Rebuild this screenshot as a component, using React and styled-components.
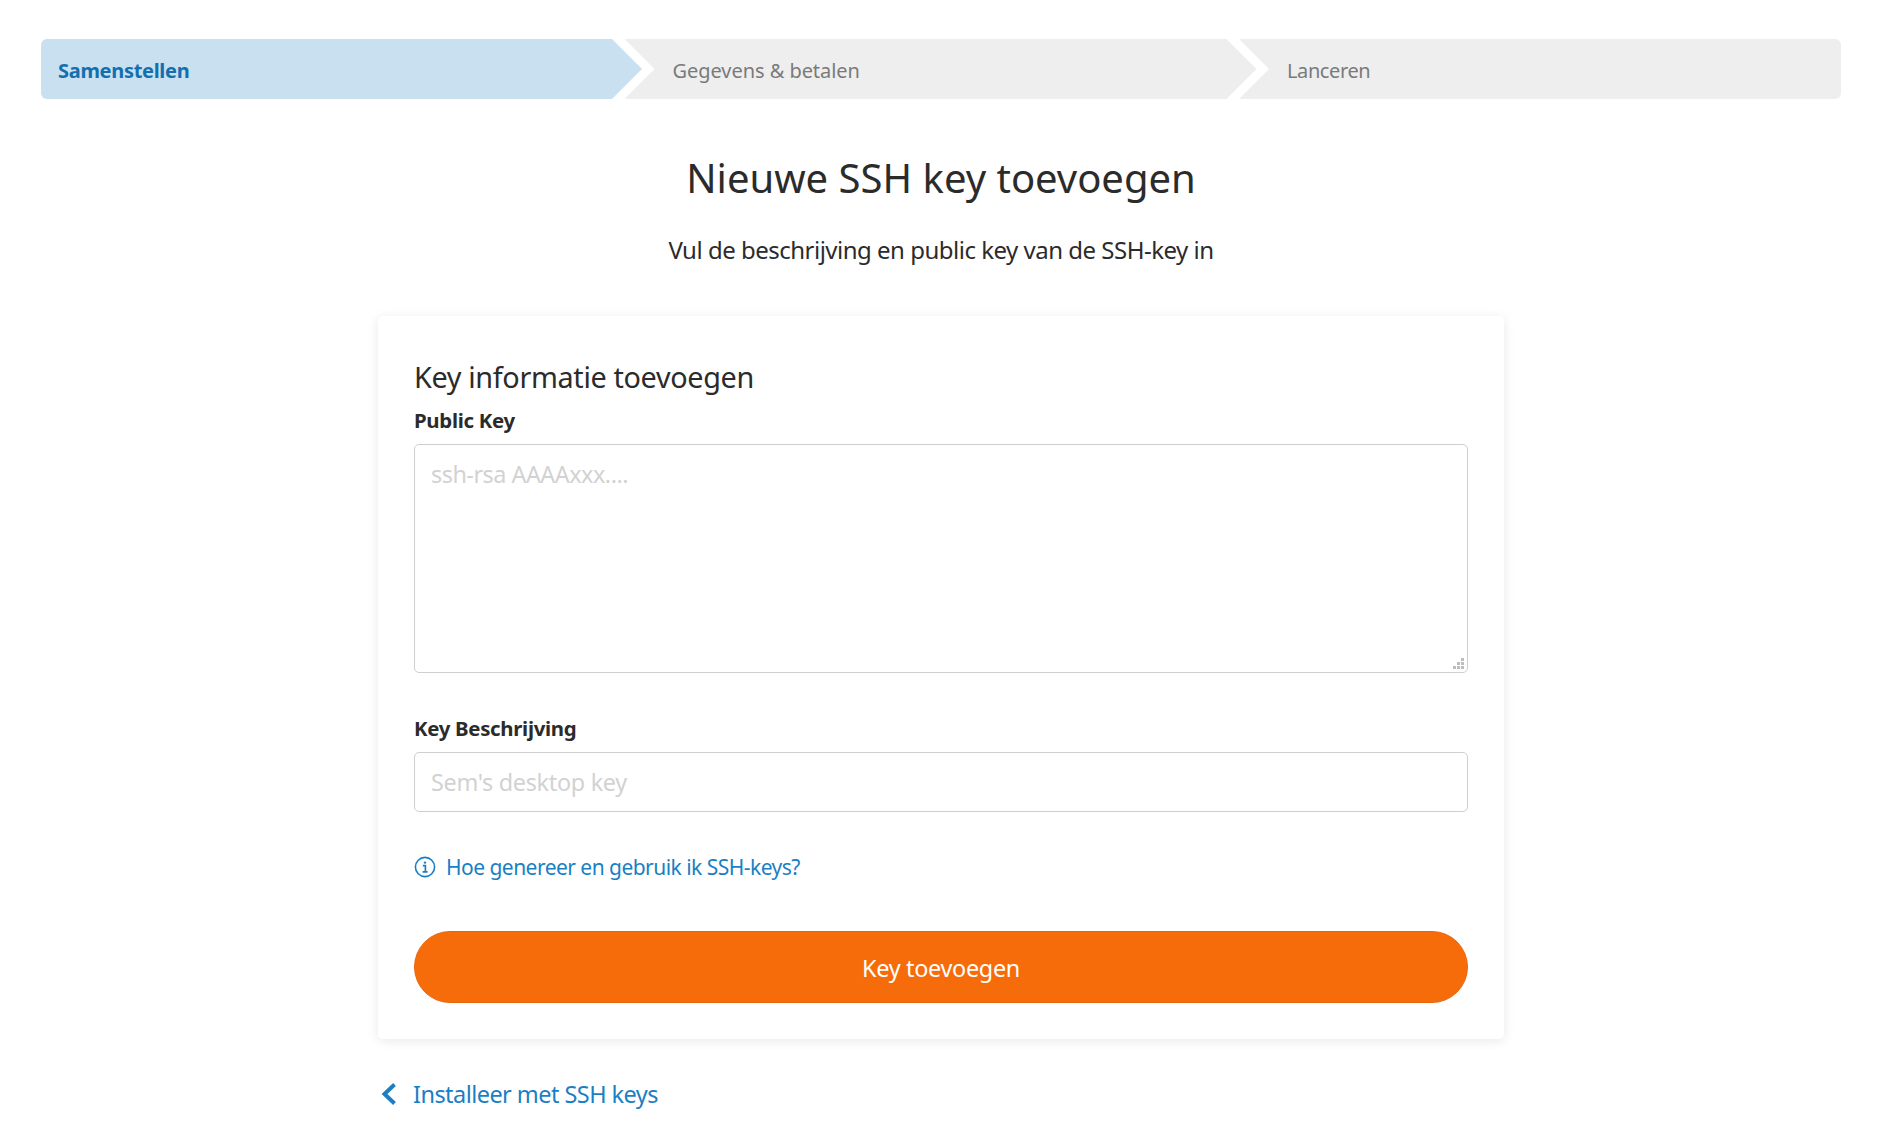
import React from 'react';
import styled, { createGlobalStyle } from 'styled-components';

const Global = createGlobalStyle`
    html, body {
        margin: 0;
        padding: 0;
        background: #fff;
    }
    body {
        font-family: "Noto Sans", "Open Sans", sans-serif;
        color: #2b2b2b;
    }
    * {
        box-sizing: border-box;
    }
`;

const Page = styled.div`
    padding: 39px 55px 0 41px;
    height: 1130px;
    overflow: hidden;
`;

const Stepper = styled.div`
    display: flex;
    height: 60px;
`;

const Step = styled.div`
    display: flex;
    align-items: center;
    height: 60px;
    font-size: 20px;
    width: ${props => props.width}px;
    margin-left: ${props => props.first ? 0 : -17.5}px;
    padding: 2px 0 0 ${props => props.first ? 17 : 48}px;
    letter-spacing: ${props => props.spacing}px;
    background: ${props => props.active ? '#c9e0f1' : '#eeeeee'};
    color: ${props => props.active ? '#136fae' : '#7a7a7a'};
    font-weight: ${props => props.active ? 700 : 400};
    border-radius: ${props => props.first ? '6px 0 0 6px' : props.last ? '0 6px 6px 0' : 0};
    clip-path: ${props => props.clip};
`;

const Header = styled.header`
    text-align: center;
`;

const Title = styled.h1`
    margin: 53px 0 0;
    font-size: 40px;
    line-height: 52px;
    font-weight: 400;
    color: #2b2b2b;
`;

const Subtitle = styled.p`
    margin: 31px 0 0;
    font-size: 24px;
    line-height: 30px;
    letter-spacing: -0.5px;
`;

const Column = styled.div`
    width: 1126px;
    margin: 0 auto;
`;

const Card = styled.section`
    margin-top: 51px;
    height: 723px;
    padding: 42px 36px 36px;
    background: #fff;
    border-radius: 5px;
    box-shadow: 0 2px 12px rgba(0, 0, 0, 0.09);
`;

const CardTitle = styled.h2`
    margin: 0 0 9px;
    font-size: 28.8px;
    line-height: 38px;
    font-weight: 400;
    letter-spacing: -0.35px;
`;

const Label = styled.label`
    display: block;
    font-size: 20.4px;
    line-height: 30px;
    font-weight: 700;
    letter-spacing: -0.3px;
    color: #2b2b2b;
`;

const fieldStyles = `
    display: block;
    width: 100%;
    border: 1px solid #cfcfcf;
    border-radius: 5px;
    padding: 0 16px;
    font-family: "Noto Sans", "Open Sans", sans-serif;
    font-size: 23.4px;
    letter-spacing: -0.3px;
    color: #2b2b2b;
    background: #fff;
    outline: none;
    &::placeholder {
        color: #d2d2d2;
        opacity: 1;
    }
`;

const TextAreaWrap = styled.div`
    position: relative;
    margin-top: 9px;
`;

const TextArea = styled.textarea`
    ${fieldStyles}
    height: 229px;
    padding-top: 14px;
    line-height: 30px;
    letter-spacing: -0.5px;
    resize: none;
`;

const Grip = styled.svg`
    position: absolute;
    right: 4px;
    bottom: 4px;
    pointer-events: none;
`;

const Field = styled.div`
    margin-top: 40px;
`;

const Input = styled.input`
    ${fieldStyles}
    height: 60px;
    margin-top: 9px;
`;

const HelpLink = styled.a`
    display: flex;
    align-items: center;
    gap: 10px;
    margin-top: 40px;
    font-size: 21px;
    line-height: 30px;
    letter-spacing: -0.53px;
    color: #1a7fc4;
    text-decoration: none;
`;

const SubmitButton = styled.button`
    display: block;
    width: 100%;
    height: 72px;
    margin-top: 49px;
    padding-top: 2px;
    border: 1px solid #e8660a;
    border-radius: 36px;
    background: #f76c0a;
    color: #fff;
    font-family: "Noto Sans", "Open Sans", sans-serif;
    font-size: 23.4px;
    letter-spacing: -0.3px;
`;

const BackLink = styled.a`
    display: flex;
    align-items: center;
    gap: 16px;
    margin-top: 38px;
    padding-left: 2px;
    font-size: 23.5px;
    line-height: 34px;
    letter-spacing: -0.55px;
    color: #1a7fc4;
    text-decoration: none;
`;

const InfoIcon = () => (
    <svg width="22" height="22" viewBox="0 0 22 22" fill="none" stroke="#1a7fc4" strokeWidth="1.6">
        <circle cx="11" cy="11" r="9.6" />
        <circle cx="11" cy="6.6" r="1.2" fill="#1a7fc4" stroke="none" />
        <path d="M8.8 9.6H11.4V15.6M8.6 15.8H13.6" strokeWidth="1.7" />
    </svg>
);

const BackIcon = () => (
    <svg width="17" height="24" viewBox="0 0 17 24" fill="none" stroke="#1a7fc4" strokeWidth="4">
        <path d="M14.5 2.5L4.5 12L14.5 21.5" />
    </svg>
);

const GRIP_DOTS = [[8, 0], [4, 4], [8, 4], [0, 8], [4, 8], [8, 8]];

const arrow = 'calc(100% - 30px)';

const App = () => (
    <>
        <Global />
        <Page>
            <Stepper>
                <Step first active width={601} spacing={-0.3} clip={`polygon(0 0, ${arrow} 0, 100% 50%, ${arrow} 100%, 0 100%)`}>
                    Samenstellen
                </Step>
                <Step width={632} spacing={-0.05} clip={`polygon(0 0, ${arrow} 0, 100% 50%, ${arrow} 100%, 0 100%, 30px 50%)`}>
                    Gegevens &amp; betalen
                </Step>
                <Step last width={602} spacing={-0.4} clip="polygon(0 0, 100% 0, 100% 100%, 0 100%, 30px 50%)">
                    Lanceren
                </Step>
            </Stepper>
            <Header>
                <Title>Nieuwe SSH key toevoegen</Title>
                <Subtitle>Vul de beschrijving en public key van de SSH-key in</Subtitle>
            </Header>
            <Column>
                <Card>
                    <CardTitle>Key informatie toevoegen</CardTitle>
                    <Label>Public Key</Label>
                    <TextAreaWrap>
                        <TextArea placeholder="ssh-rsa AAAAxxx...." />
                        <Grip width="11" height="11" viewBox="0 0 11 11" fill="#bdbdbd">
                            {GRIP_DOTS.map(([x, y]) => <rect key={`${x}-${y}`} x={x} y={y} width="3" height="3" />)}
                        </Grip>
                    </TextAreaWrap>
                    <Field>
                        <Label>Key Beschrijving</Label>
                        <Input placeholder="Sem's desktop key" />
                    </Field>
                    <HelpLink href="#">
                        <InfoIcon />
                        Hoe genereer en gebruik ik SSH-keys?
                    </HelpLink>
                    <SubmitButton>Key toevoegen</SubmitButton>
                </Card>
                <BackLink href="#">
                    <BackIcon />
                    Installeer met SSH keys
                </BackLink>
            </Column>
        </Page>
    </>
);

export default App;
